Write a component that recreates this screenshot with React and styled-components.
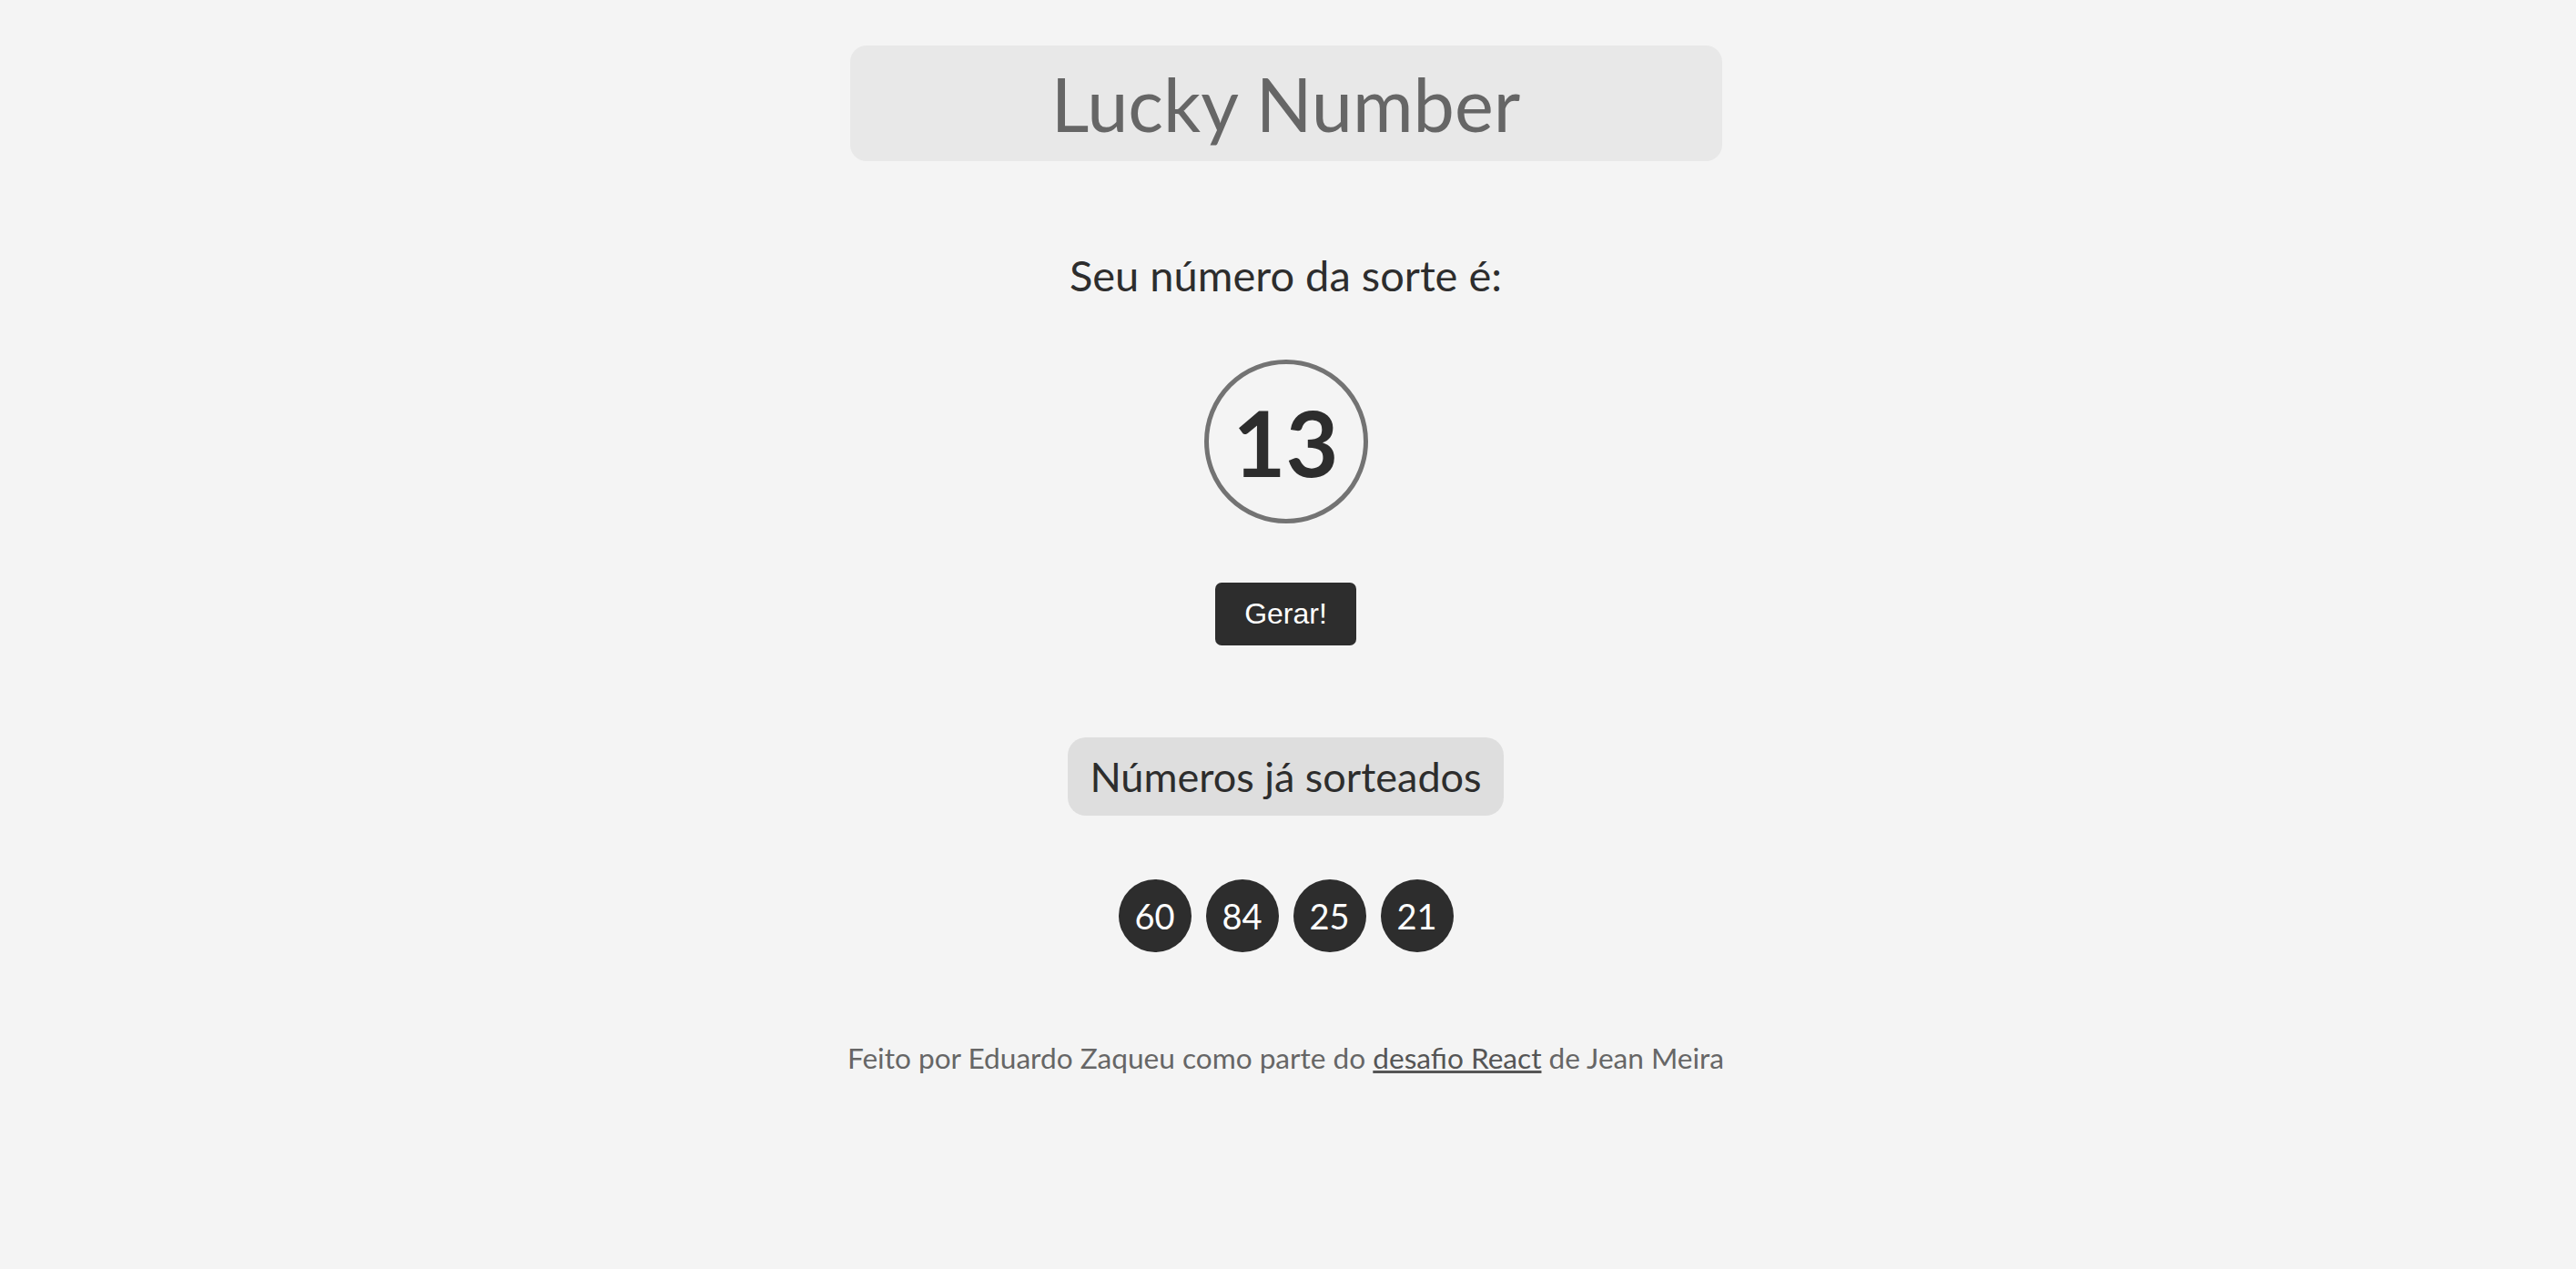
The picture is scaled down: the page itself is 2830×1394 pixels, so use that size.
import React from 'react';
import styled, { createGlobalStyle } from 'styled-components';

const GlobalStyle = createGlobalStyle`
  body {
    margin: 0;
    background: #f4f4f4;
    font-family: Lato, "Open Sans", sans-serif;
  }
`;

const drawn = [60, 84, 25, 21];

const App = () => {
  return (
    <>
      <GlobalStyle />
      <Page>
        <Title>Lucky Number</Title>
        <Subtitle>Seu número da sorte é:</Subtitle>
        <LuckyCircle>13</LuckyCircle>
        <GenerateButton>Gerar!</GenerateButton>
        <HistoryLabel>Números já sorteados</HistoryLabel>
        <BallRow>
          {drawn.map((n) => (
            <Ball key={n}>{n}</Ball>
          ))}
        </BallRow>
        <Footer>
          Feito por Eduardo Zaqueu como parte do <a href="#">desafio React</a> de Jean Meira
        </Footer>
      </Page>
    </>
  );
};

export default App;

const Page = styled.main`
  display: flex;
  flex-direction: column;
  align-items: center;
  padding: 50px 5px 0 0;
  min-height: 100vh;
  box-sizing: border-box;
`;

const Title = styled.h1`
  margin: 0;
  width: 958px;
  box-sizing: border-box;
  padding: 15px 0 14px;
  background: #e8e8e8;
  border-radius: 18px;
  text-align: center;
  font-size: 81px;
  font-weight: 400;
  line-height: 98px;
  color: #666;
`;

const Subtitle = styled.h2`
  margin: 98px 0 0;
  font-size: 47px;
  font-weight: 400;
  line-height: 55px;
  color: #2d2d2d;
`;

const LuckyCircle = styled.div`
  margin-top: 65px;
  width: 180px;
  height: 180px;
  box-sizing: border-box;
  border: 5px solid #737373;
  border-radius: 50%;
  display: flex;
  align-items: center;
  justify-content: center;
  font-size: 100px;
  font-weight: 700;
  line-height: 1.2;
  color: #2d2d2d;
`;

const GenerateButton = styled.button`
  margin-top: 65px;
  padding: 16px 32px;
  border: none;
  border-radius: 7px;
  background: #2d2d2d;
  color: #fff;
  font-family: "Liberation Sans", Arial, sans-serif;
  font-size: 32px;
  line-height: 37px;
  cursor: pointer;
`;

const HistoryLabel = styled.h3`
  margin: 101px 0 0;
  padding: 16px 24px 16px;
  background: #dedede;
  border-radius: 20px;
  font-size: 45px;
  font-weight: 400;
  line-height: 54px;
  color: #2d2d2d;
`;

const BallRow = styled.ul`
  list-style: none;
  margin: 70px 0 0;
  padding: 0;
  display: flex;
  gap: 16px;
`;

const Ball = styled.li`
  width: 80px;
  height: 80px;
  border-radius: 50%;
  background: #2d2d2d;
  color: #fff;
  display: flex;
  align-items: center;
  justify-content: center;
  font-size: 38px;
  line-height: 1;
`;

const Footer = styled.p`
  margin: 97px 0 0;
  font-size: 31.6px;
  line-height: 38px;
  color: #666;

  a {
    color: #555;
    text-decoration: underline;
  }
`;
